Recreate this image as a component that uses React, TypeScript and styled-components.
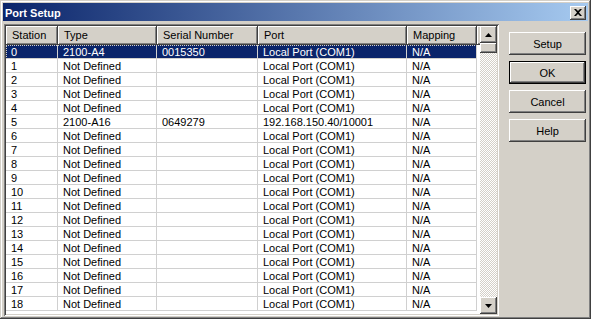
import styled, { createGlobalStyle } from 'styled-components'

const GlobalStyle = createGlobalStyle`
    html, body {
        margin: 0;
        padding: 0;
        background: #d4d0c8;
    }
    * {
        box-sizing: border-box;
    }
`

const Colunas = [
    { titulo: 'Station', largura: 52 },
    { titulo: 'Type', largura: 99 },
    { titulo: 'Serial Number', largura: 101 },
    { titulo: 'Port', largura: 149 },
    { titulo: 'Mapping', largura: 70 },
]

const Linhas = Array.from({ length: 19 }, (_, i) => {
    if (i === 0) return [String(i), '2100-A4', '0015350', 'Local Port (COM1)', 'N/A']
    if (i === 5) return [String(i), '2100-A16', '0649279', '192.168.150.40/10001', 'N/A']
    return [String(i), 'Not Defined', '', 'Local Port (COM1)', 'N/A']
})

const Botoes = ['Setup', 'OK', 'Cancel', 'Help']

const App = () => {
    return (
        <>
            <GlobalStyle />
            <Janela>
                <BarraTitulo>
                    <Titulo>Port Setup</Titulo>
                    <BotaoFechar>
                        <svg width='8' height='7' viewBox='0 0 8 7'>
                            <path d='M0 0h2l2 2 2-2h2L5 3.5 8 7H6L4 5 2 7H0l3-3.5z' fill='#000' />
                        </svg>
                    </BotaoFechar>
                </BarraTitulo>
                <Corpo>
                    <Lista>
                        <Grade>
                            <Cabecalho>
                                {Colunas.map((c) => (
                                    <CelulaCabecalho key={c.titulo} $largura={c.largura}>
                                        {c.titulo}
                                    </CelulaCabecalho>
                                ))}
                                <CelulaCabecalho $largura={3} />
                            </Cabecalho>
                            {Linhas.map((linha, i) => (
                                <Linha key={i} $selecionada={i === 0}>
                                    {linha.map((texto, j) => (
                                        <Celula key={j} $largura={Colunas[j].largura}>
                                            {texto}
                                        </Celula>
                                    ))}
                                </Linha>
                            ))}
                        </Grade>
                        <BarraRolagem>
                            <BotaoRolagem>
                                <svg width='7' height='4' viewBox='0 0 7 4'>
                                    <path d='M3.5 0L7 4H0z' fill='#000' />
                                </svg>
                            </BotaoRolagem>
                            <Polegar />
                            <Trilho />
                            <BotaoRolagem>
                                <svg width='7' height='4' viewBox='0 0 7 4'>
                                    <path d='M0 0h7L3.5 4z' fill='#000' />
                                </svg>
                            </BotaoRolagem>
                        </BarraRolagem>
                    </Lista>
                    <ColunaBotoes>
                        {Botoes.map((texto) => (
                            <Botao key={texto} $padrao={texto === 'OK'}>
                                {texto}
                            </Botao>
                        ))}
                    </ColunaBotoes>
                </Corpo>
            </Janela>
        </>
    )
}

export default App

const Janela = styled.div`
    width: 591px;
    height: 319px;
    padding: 3px;
    background: #d4d0c8;
    display: flex;
    flex-direction: column;
    font-family: 'Liberation Sans', Arial, sans-serif;
    font-size: 11px;
    color: #000;
    box-shadow: inset -1px -1px #404040, inset 1px 1px #d4d0c8, inset -2px -2px #808080,
        inset 2px 2px #ffffff;
`

const BarraTitulo = styled.div`
    height: 18px;
    display: flex;
    align-items: center;
    justify-content: space-between;
    padding: 1px 2px 0 2px;
    background: linear-gradient(to right, #0a246a, #a6caf0);
`

const Titulo = styled.span`
    color: #ffffff;
    font-weight: bold;
    font-size: 11px;
`

const BotaoFechar = styled.div`
    width: 16px;
    height: 14px;
    display: flex;
    align-items: center;
    justify-content: center;
    background: #d4d0c8;
    box-shadow: inset -1px -1px #404040, inset 1px 1px #ffffff, inset -2px -2px #808080;
`

const Corpo = styled.div`
    flex: 1;
    display: flex;
    align-items: flex-start;
    padding: 3px 0 0 1px;
`

const Lista = styled.div`
    width: 495px;
    height: 292px;
    padding: 2px;
    display: flex;
    background: #ffffff;
    box-shadow: inset 1px 1px #808080, inset -1px -1px #ffffff, inset 2px 2px #404040,
        inset -2px -2px #d4d0c8;
`

const Grade = styled.div`
    flex: 1;
    overflow: hidden;
`

const Cabecalho = styled.div`
    display: flex;
    height: 19px;
`

const CelulaCabecalho = styled.div<{ $largura: number }>`
    width: ${(p) => p.$largura}px;
    flex: none;
    height: 19px;
    line-height: 19px;
    padding-left: 6px;
    background: #d4d0c8;
    white-space: nowrap;
    overflow: hidden;
    box-shadow: inset -1px -1px #404040, inset 1px 1px #ffffff, inset -2px -2px #808080;
`

const Linha = styled.div<{ $selecionada: boolean }>`
    display: flex;
    height: 14px;
    width: 471px;
    background: ${(p) => (p.$selecionada ? '#0a246a' : '#ffffff')};
    color: ${(p) => (p.$selecionada ? '#ffffff' : '#000000')};
    outline: ${(p) => (p.$selecionada ? '1px dotted #d4d0c8' : 'none')};
    outline-offset: -1px;
`

const Celula = styled.div<{ $largura: number }>`
    width: ${(p) => p.$largura}px;
    flex: none;
    height: 14px;
    line-height: 15px;
    padding-left: 5px;
    white-space: nowrap;
    overflow: hidden;
    border-right: 1px solid #d0d0d0;
    border-bottom: 1px solid #d0d0d0;
`

const BarraRolagem = styled.div`
    width: 17px;
    display: flex;
    flex-direction: column;
    background: repeating-conic-gradient(#d4d0c8 0 25%, #ffffff 0 50%) 0 0 / 2px 2px;
`

const BotaoRolagem = styled.div`
    width: 17px;
    height: 17px;
    display: flex;
    align-items: center;
    justify-content: center;
    background: #d4d0c8;
    box-shadow: inset -1px -1px #404040, inset 1px 1px #ffffff, inset -2px -2px #808080;
`

const Polegar = styled(BotaoRolagem)`
    height: 10px;
`

const Trilho = styled.div`
    flex: 1;
`

const ColunaBotoes = styled.div`
    display: flex;
    flex-direction: column;
    gap: 6px;
    margin: 8px 0 0 10px;
`

const Botao = styled.div<{ $padrao: boolean }>`
    width: 77px;
    height: 23px;
    display: flex;
    align-items: center;
    justify-content: center;
    background: #d4d0c8;
    border: ${(p) => (p.$padrao ? '1px solid #000' : 'none')};
    box-shadow: inset -1px -1px #404040, inset 1px 1px #ffffff, inset -2px -2px #808080;
`
